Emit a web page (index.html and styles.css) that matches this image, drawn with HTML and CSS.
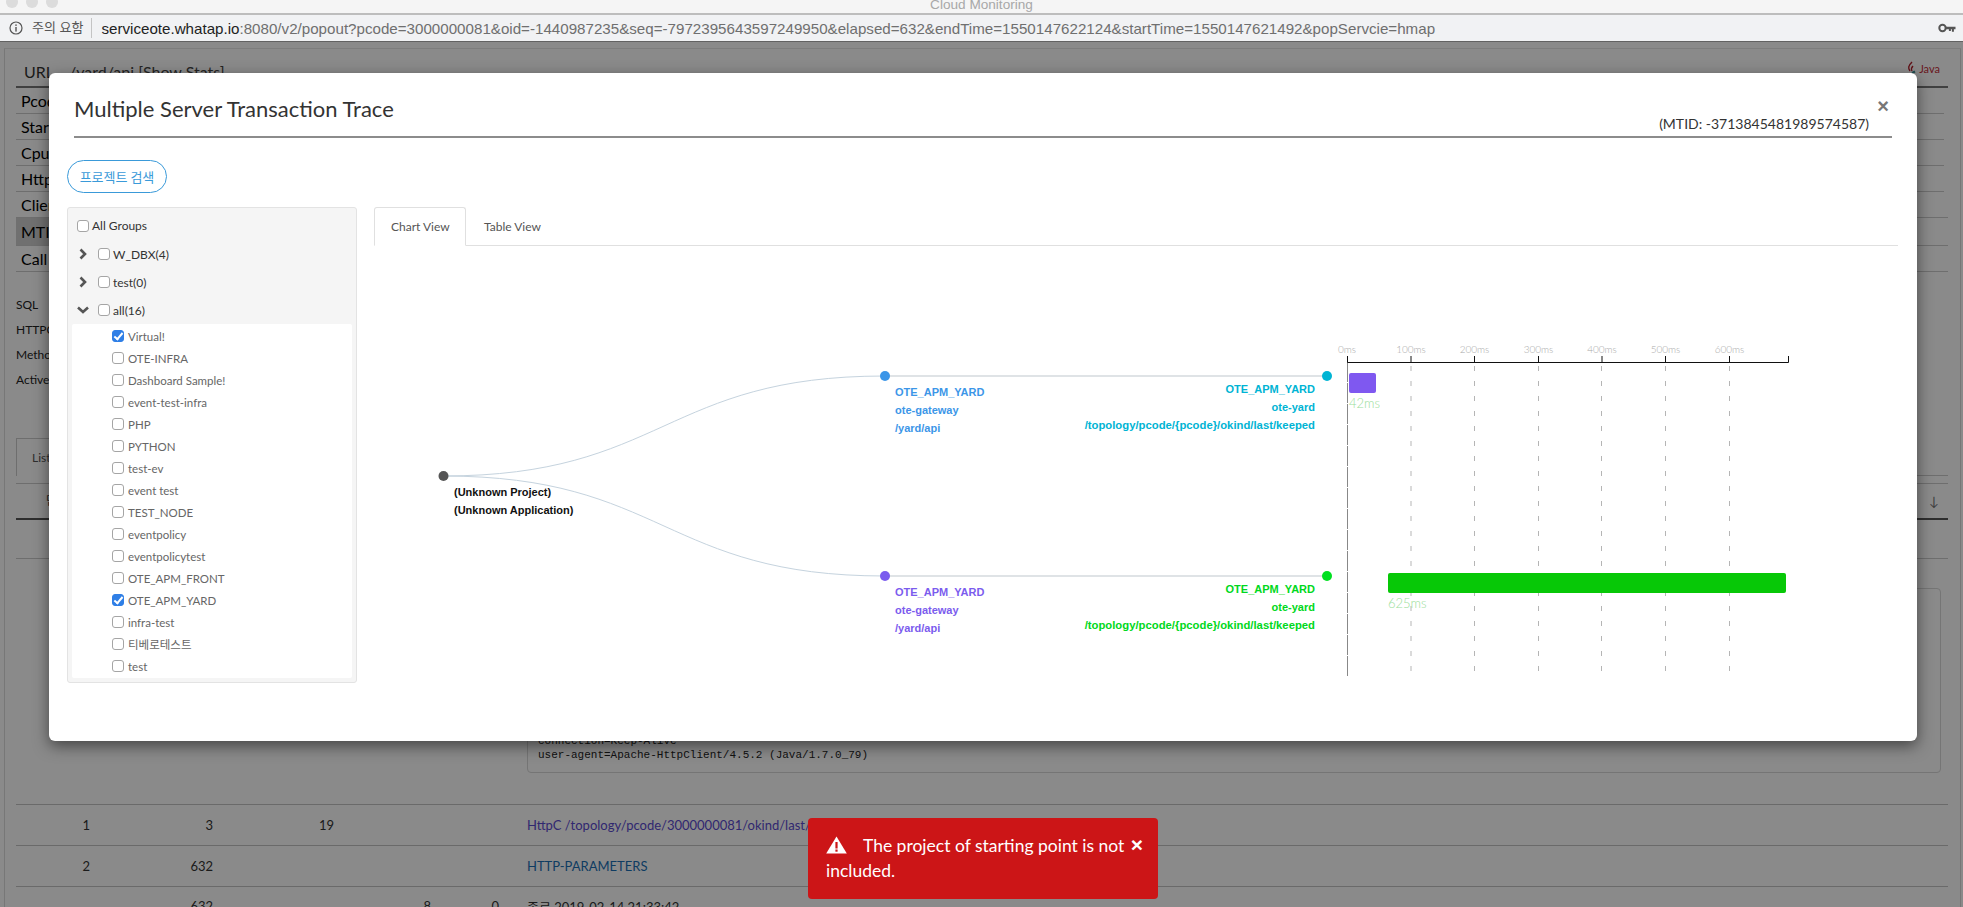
FILE: index.html
```html
<!DOCTYPE html>
<html lang="en">
<head>
    <meta charset="UTF-8">
    <meta name="viewport" content="width=device-width, initial-scale=1.0">
    <title>Cloud Monitoring</title>
    <link rel="stylesheet" href="styles.css">
</head>
<body>
    <div class="window-bar">
        <div class="lights"><span></span><span></span><span></span></div>
        <div class="window-title">Cloud Monitoring</div>
    </div>
    <div class="address-bar">
        <svg class="info-icon" width="14" height="14" viewBox="0 0 14 14"><circle cx="7" cy="7" r="6" fill="none" stroke="#555" stroke-width="1.2"/><rect x="6.3" y="6" width="1.4" height="4.6" fill="#555"/><rect x="6.3" y="3.4" width="1.4" height="1.5" fill="#555"/></svg>
        <span class="warn">주의 요함</span>
        <span class="url"><b>serviceote.whatap.io</b>:8080/v2/popout?pcode=3000000081&amp;oid=-1440987235&amp;seq=-7972395643597249950&amp;elapsed=632&amp;endTime=1550147622124&amp;startTime=1550147621492&amp;popServcie=hmap</span>
        <svg class="key-icon" width="18" height="10" viewBox="0 0 18 10"><circle cx="4.5" cy="5" r="3.2" fill="none" stroke="#555" stroke-width="2"/><path d="M8 3.8h9.5v2.4h-1.6v2.6h-2v-2.6h-1v1.8h-2v-1.8H8z" fill="#555"/></svg>
    </div>

    <div class="page">
        <div class="page-inner">
            <div class="info-head">
                <span class="info-label-head">URL</span>
                <span class="info-url">/yard/api [Show Stats]</span>
                <span class="lang">
                    <svg width="12" height="16" viewBox="0 0 12 16"><path d="M7 1C3 5 3 7 5 10M8 5C6 7 6 8 7 10" fill="none" stroke="#b3202c" stroke-width="1.4"/><path d="M7 12l3-1.5" stroke="#3a8a90" stroke-width="2"/></svg>
                    Java
                </span>
            </div>
            <div class="info-row">Pcode</div>
            <div class="info-row">Start</div>
            <div class="info-row">Cpu</div>
            <div class="info-row">Http</div>
            <div class="info-row wide">Client</div>
            <div class="info-row wide tall"><span class="active">MTID</span></div>
            <div class="info-row wide">Call</div>

            <div class="metrics">
                <div>SQL</div>
                <div>HTTPC</div>
                <div>Method</div>
                <div>Active</div>
            </div>

            <div class="list-tabs"><span class="list-tab">List</span><span class="list-rest"></span></div>
            <div class="step-head"><span>단계</span><span class="sort">↓</span></div>
            <div class="step-gap"></div>

            <div class="code-box">
                <div>connection=Keep-Alive</div>
                <div>user-agent=Apache-HttpClient/4.5.2 (Java/1.7.0_79)</div>
            </div>

            <div class="step-row">
                <span>1</span><span>3</span><span>19</span><span></span><span></span>
                <span class="step-text httpc">HttpC /topology/pcode/3000000081/okind/last/keeped</span>
            </div>
            <div class="step-row">
                <span>2</span><span>632</span><span></span><span></span><span></span>
                <span class="step-text http-param">HTTP-PARAMETERS</span>
            </div>
            <div class="step-row">
                <span></span><span>632</span><span></span><span>8</span><span>0</span>
                <span class="step-text">종료 2019-02-14 21:33:42</span>
            </div>
        </div>
    </div>

    <div class="overlay"></div>

    <div class="modal">
        <button class="close">&times;</button>
        <div class="modal-header">
            <h1>Multiple Server Transaction Trace</h1>
            <span class="mtid">(MTID: -3713845481989574587)</span>
        </div>
        <button class="search-btn">프로젝트 검색</button>
        <div class="modal-main">
            <div class="tree">
                <label class="tree-all"><input type="checkbox"> All Groups</label>
                <div class="tree-group">
                    <svg class="chev" width="10" height="12" viewBox="0 0 10 12"><path d="M2.5 1.5L7 6l-4.500 4.500" fill="none" stroke="#555" stroke-width="2.600"/></svg>
                    <label><input type="checkbox"> W_DBX(4)</label>
                </div>
                <div class="tree-group">
                    <svg class="chev" width="10" height="12" viewBox="0 0 10 12"><path d="M2.5 1.5L7 6l-4.500 4.500" fill="none" stroke="#555" stroke-width="2.600"/></svg>
                    <label><input type="checkbox"> test(0)</label>
                </div>
                <div class="tree-group">
                    <svg class="chev open" width="12" height="10" viewBox="0 0 12 10"><path d="M1 2.500L6 7l5-4.500" fill="none" stroke="#555" stroke-width="2.600"/></svg>
                    <label><input type="checkbox"> all(16)</label>
                </div>
                <div class="tree-items">
                    <label><input type="checkbox" checked> Virtual!</label>
                    <label><input type="checkbox"> OTE-INFRA</label>
                    <label><input type="checkbox"> Dashboard Sample!</label>
                    <label><input type="checkbox"> event-test-infra</label>
                    <label><input type="checkbox"> PHP</label>
                    <label><input type="checkbox"> PYTHON</label>
                    <label><input type="checkbox"> test-ev</label>
                    <label><input type="checkbox"> event test</label>
                    <label><input type="checkbox"> TEST_NODE</label>
                    <label><input type="checkbox"> eventpolicy</label>
                    <label><input type="checkbox"> eventpolicytest</label>
                    <label><input type="checkbox"> OTE_APM_FRONT</label>
                    <label><input type="checkbox" checked> OTE_APM_YARD</label>
                    <label><input type="checkbox"> infra-test</label>
                    <label><input type="checkbox"> 티베로테스트</label>
                    <label><input type="checkbox"> test</label>
                </div>
            </div>

            <div class="view">
                <div class="tabs">
                    <span class="tab current">Chart View</span>
                    <span class="tab">Table View</span>
                </div>
                <!-- coordinates in the viewBox are the page's own -->
                <svg class="chart" width="1524" height="450" viewBox="374 246 1524 450">
                    <g class="links">
                        <path d="M443 476C664 476 664 376 885 376"/>
                        <path d="M443 476C664 476 664 576 885 576"/>
                        <path class="straight" d="M885 376H1327"/>
                        <path class="straight" d="M885 576H1327"/>
                    </g>
                    <circle cx="443.500" cy="476" r="5" fill="#555"/>
                    <circle cx="885" cy="376" r="5" fill="#3c96e8"/>
                    <circle cx="1327" cy="376" r="5" fill="#00b4d4"/>
                    <circle cx="885" cy="576" r="5" fill="#7b5cee"/>
                    <circle cx="1327" cy="576" r="5" fill="#00e020"/>

                    <g class="node-text root-text">
                        <text x="454" y="496">(Unknown Project)</text>
                        <text x="454" y="514">(Unknown Application)</text>
                    </g>
                    <g class="node-text" fill="#3c96e8">
                        <text x="895" y="396">OTE_APM_YARD</text>
                        <text x="895" y="414">ote-gateway</text>
                        <text x="895" y="432">/yard/api</text>
                    </g>
                    <g class="node-text end" fill="#00b4d4">
                        <text x="1315" y="393">OTE_APM_YARD</text>
                        <text x="1315" y="411">ote-yard</text>
                        <text class="long" x="1315" y="429">/topology/pcode/{pcode}/okind/last/keeped</text>
                    </g>
                    <g class="node-text" fill="#7b5cee">
                        <text x="895" y="596">OTE_APM_YARD</text>
                        <text x="895" y="614">ote-gateway</text>
                        <text x="895" y="632">/yard/api</text>
                    </g>
                    <g class="node-text end" fill="#00d820">
                        <text x="1315" y="593">OTE_APM_YARD</text>
                        <text x="1315" y="611">ote-yard</text>
                        <text class="long" x="1315" y="629">/topology/pcode/{pcode}/okind/last/keeped</text>
                    </g>

                    <g class="grid">
                        <path d="M1411 366V672M1474.500 366V672M1538.500 366V672M1601.500 366V672M1665.500 366V672M1729.500 366V672"/>
                    </g>
                    <path class="base" d="M1347.500 362V676"/>
                    <path class="axis" d="M1347.500 356V362.500H1788.500V356M1411 356V362M1474.500 356V362M1538.500 356V362M1602 356V362M1665.500 356V362M1729.500 356V362"/>
                    <g class="ticks">
                        <text x="1347" y="353">0ms</text>
                        <text x="1411" y="353">100ms</text>
                        <text x="1474.500" y="353">200ms</text>
                        <text x="1538.500" y="353">300ms</text>
                        <text x="1602" y="353">400ms</text>
                        <text x="1665.500" y="353">500ms</text>
                        <text x="1729.500" y="353">600ms</text>
                    </g>
                    <rect x="1349" y="373" width="27" height="20" rx="2" fill="#7f58f0"/>
                    <rect x="1388" y="573" width="398" height="20" rx="2" fill="#07c807"/>
                    <text class="bar-label" x="1349" y="408">42ms</text>
                    <text class="bar-label" x="1388" y="608">625ms</text>
                </svg>
            </div>
        </div>
    </div>

    <div class="toast">
        <button class="toast-close">&times;</button>
        <svg class="toast-icon" width="21" height="18" viewBox="0 0 21 18"><path d="M10.500 .5L20.800 17.500H.2z" fill="#fff"/><rect x="9.400" y="6" width="2.200" height="6.500" fill="#cc1517"/><rect x="9.400" y="13.500" width="2.200" height="2.200" fill="#cc1517"/></svg>
        The project of starting point is not included.
    </div>
</body>
</html>
```

FILE: styles.css
```css
* {
    box-sizing: border-box;
}

html, body {
    margin: 0;
    height: 907px;
    overflow: hidden;
}

body {
    font-family: Lato, "Noto Sans CJK KR", sans-serif;
    color: #333;
    background: #fff;
}

.window-bar {
    height: 15px;
    background: #f5f5f5;
    border-bottom: 2px solid #bdbdbd;
    overflow: hidden;
    display: flex;
    position: relative;
}

.lights {
    display: flex;
    gap: 8px;
    margin: -4px 0 0 6px;
}

.lights span {
    width: 12px;
    height: 12px;
    border-radius: 50%;
    background: #dcdcdc;
}

.window-title {
    position: absolute;
    left: 0;
    right: 0;
    top: -3px;
    text-align: center;
    font: 13.600px "Liberation Sans", sans-serif;
    color: #a8a8a8;
}

.address-bar {
    height: 27px;
    background: #f1f2f4;
    border-bottom: 1px solid #b5b5b5;
    display: flex;
    align-items: center;
    padding: 0 7px 0 9px;
    font: 15.150px "Liberation Sans", "Noto Sans CJK KR", sans-serif;
    color: #6f6f6f;
}

.warn {
    font-size: 13px;
    color: #555;
    margin-left: 9px;
    padding-right: 8px;
    border-right: 1px solid #c4c4c4;
    line-height: 20px;
}

.url {
    margin-left: 9px;
    white-space: nowrap;
}

.url b {
    font-weight: normal;
    color: #222;
}

.key-icon {
    margin-left: auto;
}

.page {
    padding: 6px 2px 0 4px;
    height: 866px;
    background: #fff;
}

.page-inner {
    height: 900px;
    border-left: 1px solid #ddd;
    border-right: 1px solid #ddd;
    border-top: 1px solid #e8e8e8;
    padding-left: 11px;
    padding-right: 12px;
    font-size: 16px;
}

.info-head {
    height: 39px;
    border-bottom: 2px solid #777;
    display: flex;
    align-items: center;
    padding: 8px 8px 0 8px;
    font-size: 16px;
}

.info-label-head {
    width: 45px;
}

.info-url {
    color: #444;
}

.lang {
    margin-left: auto;
    margin-top: -6px;
    font-size: 11px;
    color: #c4303c;
    display: flex;
    align-items: center;
    gap: 2px;
}

.info-row {
    height: 26px;
    line-height: 25px;
    border-bottom: 1px solid #ccc;
    margin-right: 4px;
    padding-left: 5px;
    color: #000;
}

.info-row.wide {
    margin-right: 0;
}

.info-row.tall {
    height: 28px;
}

.info-row .active {
    display: block;
    width: 120px;
    height: 27px;
    line-height: 27px;
    margin-left: -5px;
    padding-left: 5px;
    background: #d0d0d0;
}

.metrics {
    margin-top: 20px;
    font-size: 12px;
    color: #222;
}

.metrics div {
    height: 25px;
    line-height: 25px;
}

.list-tabs {
    margin-top: 46px;
    height: 46px;
    border-bottom: 1px solid #ccc;
    display: flex;
    align-items: flex-start;
}

.list-tab {
    width: 120px;
    height: 38px;
    line-height: 38px;
    border: 1px solid #ccc;
    border-bottom: none;
    padding-left: 15px;
    font-size: 12px;
    color: #555;
}

.list-rest {
    flex: 1;
    height: 38px;
    border-bottom: 1px solid #ccc;
}

.step-head {
    height: 36px;
    border-bottom: 2px solid #555;
    font-size: 12px;
    line-height: 34px;
    padding: 0 9px 0 30px;
    display: flex;
    justify-content: space-between;
}

.sort {
    color: #777;
    font-size: 13px;
}

.step-gap {
    height: 39px;
    border-bottom: 1px solid #ccc;
}

.code-box {
    margin: 29px 7px 31px 511px;
    height: 185px;
    display: flex;
    flex-direction: column;
    justify-content: flex-end;
    padding: 0 0 10px 10px;
    border: 1px solid #d8d8d8;
    border-radius: 4px;
    font: 11px/14px "Liberation Mono", monospace;
    color: #222;
}

.step-row {
    height: 41px;
    border-top: 1px solid #c4c4c4;
    display: grid;
    grid-template-columns: 74px 123px 121px 97px 68px 1fr;
    align-items: center;
    font-size: 13px;
    color: #333;
    text-align: right;
}

.step-row:last-child {
    height: 39px;
}

.step-text {
    text-align: left;
    padding-left: 28px;
}

.httpc {
    color: #5a4ad0;
}

.http-param {
    color: #1a6fb5;
}

.overlay {
    position: absolute;
    left: 0;
    right: 0;
    top: 41px;
    bottom: 0;
    background: rgba(0, 0, 0, 0.46);
}

.modal {
    position: absolute;
    left: 49px;
    top: 73px;
    width: 1868px;
    height: 668px;
    background: #fff;
    border-radius: 6px;
    box-shadow: 0 5px 15px rgba(0, 0, 0, 0.5);
    padding: 0 19px 0 18px;
}

.modal-header {
    margin: 0 6px 0 7px;
    height: 65px;
    border-bottom: 2px solid #8c8c8c;
    display: flex;
    justify-content: space-between;
    align-items: flex-end;
    padding-right: 23px;
}

h1 {
    margin: 0 0 14px;
    font-size: 22px;
    font-weight: 400;
    color: #333;
}

.mtid {
    font-size: 14px;
    color: #333;
    margin-bottom: 4px;
}

.close {
    position: absolute;
    right: 28px;
    top: 23px;
    padding: 0;
    border: none;
    background: none;
    font: 700 20px/20px "Liberation Sans", sans-serif;
    color: #777;
}

.search-btn {
    display: block;
    margin-top: 22px;
    width: 100px;
    height: 33px;
    border: 1px solid #3a9ad9;
    border-radius: 17px;
    background: #fff;
    color: #3a9ad9;
    font: 13px "Noto Sans CJK KR", sans-serif;
    padding: 0;
}

.modal-main {
    margin-top: 14px;
    display: flex;
    gap: 17px;
}

.tree {
    width: 290px;
    height: 476px;
    flex: none;
    background: #f5f5f5;
    border: 1px solid #e3e3e3;
    border-radius: 3px;
    padding: 0 4px;
    font-size: 12px;
    color: #333;
}

.tree label {
    display: flex;
    align-items: center;
    gap: 3px;
}

.tree-all {
    height: 35px;
    margin-bottom: -3px;
    padding-left: 5px;
}

.tree-group {
    height: 28px;
    display: flex;
    align-items: center;
    padding-left: 6px;
}

.chev {
    flex: none;
    margin-right: 10px;
}

.chev.open {
    margin-left: -1px;
    margin-right: 9px;
}

.tree-items {
    background: #fff;
    height: 354px;
    padding: 1px 0 0 40px;
    color: #666;
    font-size: 11.500px;
    border-radius: 2px;
}

.tree .tree-items label {
    height: 22px;
    gap: 4px;
}

input[type="checkbox"] {
    appearance: none;
    margin: 0;
    width: 12px;
    height: 12px;
    flex: none;
    background: #fff;
    border: 1px solid #a5a5a5;
    border-radius: 3px;
    position: relative;
}

input[type="checkbox"]:checked {
    background: #2f7fe6;
    border-color: #2f7fe6;
}

input[type="checkbox"]:checked::after {
    content: "";
    position: absolute;
    left: 3px;
    top: 0;
    width: 3px;
    height: 7px;
    border: solid #fff;
    border-width: 0 2px 2px 0;
    transform: rotate(40deg);
}

.view {
    flex: 1;
}

.tabs {
    height: 39px;
    display: flex;
    border-bottom: 1px solid #e0e0e0;
    font-size: 12px;
    color: #555;
}

.tab {
    height: 39px;
    line-height: 38px;
    padding: 0 17px;
    border: 1px solid transparent;
    white-space: nowrap;
}

.tab.current {
    width: 92px;
    padding: 0 16px;
    background: #fff;
    border-color: #e0e0e0;
    border-bottom-color: #fff;
    border-radius: 3px 3px 0 0;
}

.chart {
    display: block;
}

.links path {
    fill: none;
    stroke: #c5d3de;
    stroke-width: 1;
}

.links .straight {
    stroke: #dfe3e6;
    stroke-width: 2;
}

.node-text text {
    font: 700 11px "Liberation Sans", sans-serif;
}

.node-text.end text {
    text-anchor: end;
}

.node-text text.long {
    font-size: 11.300px;
}

.root-text {
    fill: #111;
}

.grid path {
    fill: none;
    stroke: #b5b5b5;
    stroke-dasharray: 5 10;
}

.base {
    fill: none;
    stroke: #888;
    stroke-dasharray: 20 1;
}

.axis {
    fill: none;
    stroke: #111;
}

.ticks text {
    font: 300 10px Lato, sans-serif;
    fill: #aaa;
    text-anchor: middle;
}

.bar-label {
    font: 300 13px Lato, sans-serif;
    fill: #9ade9a;
}

.toast {
    position: absolute;
    left: 808px;
    top: 818px;
    width: 350px;
    height: 81px;
    background: #cc1517;
    border-radius: 4px;
    padding: 15px 18px;
    color: #fff;
    font-size: 17.500px;
    line-height: 25px;
}

.toast-icon {
    margin-right: 12px;
    vertical-align: -2px;
}

.toast-close {
    float: right;
    padding: 0;
    margin: 0 -3px 0 3px;
    border: none;
    background: none;
    color: #fff;
    font: 700 21px/24px "Liberation Sans", sans-serif;
}
```
